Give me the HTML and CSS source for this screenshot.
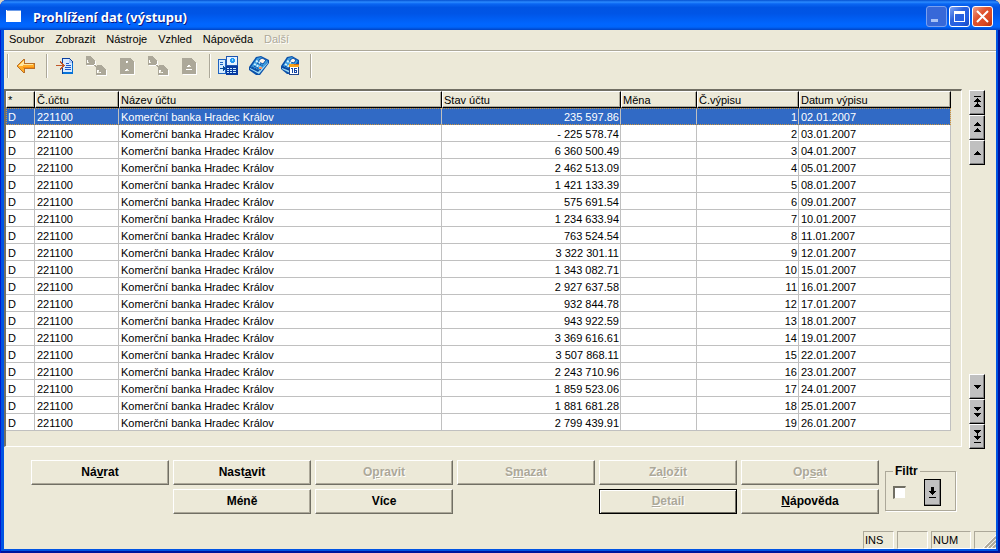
FILE: index.html
```
<!DOCTYPE html>
<html lang="cs">
<head>
<meta charset="utf-8">
<title>Prohlížení dat (výstupu)</title>
<link rel="stylesheet" href="styles.css">
</head>
<body>
<svg class="symbols" aria-hidden="true">
  <symbol id="pages" viewBox="0 0 22 20">
    <path fill="currentColor" fill-rule="evenodd" d="M1 0h5v1h1v1h1v1h1v1h1v5h-9zM2 4v3h2v-1h-1v-2zM12 9h5v1h1v1h1v1h1v1h1v6h-10v-8h-1v-1h2zM12 14v3h4v-1h-2v-2zM9 8h1v1h1v1h-2z"/>
  </symbol>
</svg>
<div class="window">
  <header class="title-bar">
    <svg class="app-icon" viewBox="0 0 16 12" shape-rendering="crispEdges"><path fill="#fff" d="M0 0h15v12H0z"/><path fill="#6f9de8" d="M1 0h14v1H1z"/></svg>
    <h1 class="title">Prohlížení dat (výstupu)</h1>
    <div class="captions">
      <button class="caption faded" disabled aria-label="Minimalizovat"><svg viewBox="0 0 19 19"><path fill="#a9c2f5" d="M4 12h7v3H4z"/></svg></button>
      <button class="caption" aria-label="Maximalizovat"><svg viewBox="0 0 19 19"><path fill="#fff" fill-rule="evenodd" d="M4 4h11v11H4zM5 7v7h9V7z"/></svg></button>
      <button class="caption close" aria-label="Zavřít"><svg viewBox="0 0 19 19"><path stroke="#fff" stroke-width="2" d="M4 4l11 11M15 4L4 15"/></svg></button>
    </div>
  </header>

  <main class="client">
    <nav class="menu">
      <button>Soubor</button><button>Zobrazit</button><button>Nástroje</button><button>Vzhled</button><button>Nápověda</button><button disabled>Další</button>
    </nav>

    <div class="toolbar" role="toolbar">
      <span class="separator"></span>
      <button class="tool" aria-label="Návrat">
        <svg width="20" height="16" viewBox="0 0 20 16" shape-rendering="crispEdges">
          <path fill="#b8702a" d="M7 1h2v4h10v6h-10v4h-2v-1h-1v-1h-1v-1h-1v-1h-1v-1h-1v-1h-1v-2h1v-1h1v-1h1v-1h1v-1h1v-1h1z"/>
          <path fill="#ffab26" d="M7 2h1v4h10v4h-10v4h-1v-1h-1v-1h-1v-1h-1v-1h-1v-1h-1v-2h1v-1h1v-1h1v-1h1v-1h1z"/>
          <path fill="#ffe7a0" d="M7 3h1v3h9v1h-10v1h-4v-1h1v-1h1v-1h1v-1h1z"/><path fill="#f98b0a" d="M7 9h11v1h-11z"/>
        </svg>
      </button>
      <span class="separator"></span>
      <button class="tool" aria-label="Otevřít záznam">
        <svg width="20" height="18" viewBox="0 0 20 18" shape-rendering="crispEdges">
          <path fill="#0a3f9e" d="M7 1h8v1h1v1h1v1h1v13h-11z"/><path fill="#0673d8" d="M8 15h10v2h-10zM17 6h1v11h-1z"/>
          <path fill="#d9eaff" d="M8 2h6v4h3v9h-9z"/><path fill="#a9c9fb" d="M14 2h1v1h1v1h1v2h-3z"/>
          <path fill="#1f5ac8" d="M11 6h3v1h-3zM11 8h5v1h-5zM10 10h6v1h-6zM10 12h6v1h-6z"/>
          <path fill="#c0592b" d="M1 8h6v-1h-1v-1h-1v-2h1v1h1v1h1v1h1v1h1v1h-1v1h-1v1h-1v1h-1v1h-1v-2h1v-1h1v-1h-6z"/>
        </svg>
      </button>
      <button class="tool" disabled aria-label="Kopírovat"><svg width="22" height="20" shape-rendering="crispEdges"><use href="#pages"/></svg></button>
      <button class="tool" disabled aria-label="Záznam">
        <svg width="16" height="18" viewBox="0 0 16 18" shape-rendering="crispEdges"><path fill="currentColor" fill-rule="evenodd" d="M1 1h11v1h1v1h1v1h1v13h-14zM7 4v2h2v-2zM7 12v1h-1v1h4v-1h-1v-1z"/></svg>
      </button>
      <button class="tool" disabled aria-label="Přesunout"><svg width="22" height="20" shape-rendering="crispEdges"><use href="#pages"/></svg></button>
      <button class="tool" disabled aria-label="Smazat záznam">
        <svg width="18" height="18" viewBox="0 0 18 18" shape-rendering="crispEdges"><path fill="currentColor" fill-rule="evenodd" d="M2 1h10v1h1v1h1v1h1v1h1v12h-14zM8 8v1h-1v1h4v-1h-1v-1zM6 12v1h6v-1z"/></svg>
      </button>
      <span class="separator"></span>
      <button class="tool" aria-label="Převod dat">
        <svg width="20" height="20" viewBox="0 0 20 20" shape-rendering="crispEdges">
          <path fill="#1e63c2" d="M0 3h8v15H0z"/><path fill="#d5ebff" d="M1 4h6v13H1z"/><path fill="#1e63c2" d="M2 6h3v1H2zM2 8h3v1H2z"/>
          <path fill="#064a9c" d="M2 12h3v-2h1v1h1v1h1v1h-1v1h-1v1h-1v-2h-3z"/>
          <path fill="#1e55b0" d="M8 0h12v10H8z"/><path fill="#e6f3ff" d="M9 1h10v8H9z"/><path fill="#2497f2" d="M13 2h3v1h1v3h-1v1h-3v-1h-1v-3h1z"/><path fill="#8fe2ff" d="M14 3h1v2h-1z"/>
          <path fill="#0639a0" d="M8 10h12v9H8z"/><path fill="#c9ecff" d="M9 12h2v1H9zM12 12h2v1h-2zM15 12h3v1h-3zM9 14h2v1H9zM12 14h2v1h-2zM15 14h3v1h-3zM9 16h2v1H9zM12 16h2v1h-2zM15 16h3v1h-3z"/>
        </svg>
      </button>
      <button class="tool" aria-label="Kalkulačka">
        <svg width="22" height="20" viewBox="0 0 22 20">
          <path fill="#0a4fa8" d="M8 1l5-1 8 4v3l-9 12H8l-7-5v-3z"/><path fill="#3c9de0" d="M9 2l4-1 7 4-8 10-9-4z"/>
          <path fill="#9edcf8" d="M2 12l8 4 10-10v1L11 18l-9-5z"/><path fill="#fff4e8" stroke="#0a4fa8" d="M11 4l3-2 4 2-3 4-4-2z"/>
          <path stroke="#d3f2ff" stroke-width="2" stroke-dasharray="2 1" d="M6 8l7 4M8 5l4 2"/><path stroke="#0a3f96" stroke-dasharray="2 1" d="M4 11l8 4M6 10l7 4M9 7l6 3"/><path fill="#f4956b" d="M11 11h3v2h-3z"/>
        </svg>
      </button>
      <button class="tool" aria-label="Kalendář">
        <svg width="22" height="20" viewBox="0 0 22 20">
          <path fill="#0a4fa8" d="M8 1l5-1 7 4v4l-9 10H8l-6-5v-3z"/><path fill="#3c9de0" d="M9 2l4-1 6 4-7 9-8-4z"/><path fill="#9edcf8" d="M3 12l8 3v2l-8-4z"/><path fill="#fff4e8" stroke="#0a4fa8" d="M11 4l3-2 3 2-2 3-4-1z"/>
          <path stroke="#d3f2ff" stroke-width="2" stroke-dasharray="2 1" d="M6 8l5 3M8 5l4 2"/><path stroke="#0a3f96" stroke-dasharray="2 1" d="M4 11l7 3M6 10l5 3"/>
          <g shape-rendering="crispEdges"><path fill="#23468d" d="M10 8h10v11H10z"/><path fill="#fff" d="M11 11h8v7h-8z"/><path fill="#f9a318" d="M10 8h10v3H10z"/><path fill="#d9670c" d="M15 8h5v1h-5z"/>
          <path fill="#1747a5" d="M12 12h2v5h-1v-4h-1zM15 12h3v1h-2v1h2v3h-3zM16 15v1h1v-1z"/></g>
        </svg>
      </button>
      <span class="separator"></span>
    </div>

    <div class="browser">
      <div class="frame">
        <table class="grid">
          <colgroup><col class="c-mark"><col class="c-account"><col><col class="c-balance"><col class="c-currency"><col class="c-number"><col class="c-date"></colgroup>
          <thead><tr><th>*</th><th>Č.účtu</th><th>Název účtu</th><th>Stav účtu</th><th>Měna</th><th>Č.výpisu</th><th>Datum výpisu</th></tr></thead>
          <tbody>
            <tr class="selected"><td>D</td><td>221100</td><td>Komerční banka Hradec Králov</td><td class="num">235 597.86</td><td></td><td class="num">1</td><td>02.01.2007</td></tr>
            <tr><td>D</td><td>221100</td><td>Komerční banka Hradec Králov</td><td class="num">- 225 578.74</td><td></td><td class="num">2</td><td>03.01.2007</td></tr>
            <tr><td>D</td><td>221100</td><td>Komerční banka Hradec Králov</td><td class="num">6 360 500.49</td><td></td><td class="num">3</td><td>04.01.2007</td></tr>
            <tr><td>D</td><td>221100</td><td>Komerční banka Hradec Králov</td><td class="num">2 462 513.09</td><td></td><td class="num">4</td><td>05.01.2007</td></tr>
            <tr><td>D</td><td>221100</td><td>Komerční banka Hradec Králov</td><td class="num">1 421 133.39</td><td></td><td class="num">5</td><td>08.01.2007</td></tr>
            <tr><td>D</td><td>221100</td><td>Komerční banka Hradec Králov</td><td class="num">575 691.54</td><td></td><td class="num">6</td><td>09.01.2007</td></tr>
            <tr><td>D</td><td>221100</td><td>Komerční banka Hradec Králov</td><td class="num">1 234 633.94</td><td></td><td class="num">7</td><td>10.01.2007</td></tr>
            <tr><td>D</td><td>221100</td><td>Komerční banka Hradec Králov</td><td class="num">763 524.54</td><td></td><td class="num">8</td><td>11.01.2007</td></tr>
            <tr><td>D</td><td>221100</td><td>Komerční banka Hradec Králov</td><td class="num">3 322 301.11</td><td></td><td class="num">9</td><td>12.01.2007</td></tr>
            <tr><td>D</td><td>221100</td><td>Komerční banka Hradec Králov</td><td class="num">1 343 082.71</td><td></td><td class="num">10</td><td>15.01.2007</td></tr>
            <tr><td>D</td><td>221100</td><td>Komerční banka Hradec Králov</td><td class="num">2 927 637.58</td><td></td><td class="num">11</td><td>16.01.2007</td></tr>
            <tr><td>D</td><td>221100</td><td>Komerční banka Hradec Králov</td><td class="num">932 844.78</td><td></td><td class="num">12</td><td>17.01.2007</td></tr>
            <tr><td>D</td><td>221100</td><td>Komerční banka Hradec Králov</td><td class="num">943 922.59</td><td></td><td class="num">13</td><td>18.01.2007</td></tr>
            <tr><td>D</td><td>221100</td><td>Komerční banka Hradec Králov</td><td class="num">3 369 616.61</td><td></td><td class="num">14</td><td>19.01.2007</td></tr>
            <tr><td>D</td><td>221100</td><td>Komerční banka Hradec Králov</td><td class="num">3 507 868.11</td><td></td><td class="num">15</td><td>22.01.2007</td></tr>
            <tr><td>D</td><td>221100</td><td>Komerční banka Hradec Králov</td><td class="num">2 243 710.96</td><td></td><td class="num">16</td><td>23.01.2007</td></tr>
            <tr><td>D</td><td>221100</td><td>Komerční banka Hradec Králov</td><td class="num">1 859 523.06</td><td></td><td class="num">17</td><td>24.01.2007</td></tr>
            <tr><td>D</td><td>221100</td><td>Komerční banka Hradec Králov</td><td class="num">1 881 681.28</td><td></td><td class="num">18</td><td>25.01.2007</td></tr>
            <tr><td>D</td><td>221100</td><td>Komerční banka Hradec Králov</td><td class="num">2 799 439.91</td><td></td><td class="num">19</td><td>26.01.2007</td></tr>
          </tbody>
        </table>
      </div>
      <div class="pager">
        <div class="pager-group">
          <button aria-label="Začátek"><svg viewBox="0 0 7 13" shape-rendering="crispEdges"><path d="M0 0h7v1H0zM3 2h1v1h1v1h1v1h1v1H4v2h1v1h1v1h1v1H0v-1h1V9h1V8h1V6H0V5h1V4h1V3h1z"/></svg></button>
          <button aria-label="Stránka zpět"><svg viewBox="0 0 7 13" shape-rendering="crispEdges"><path d="M3 1h1v1h1v1h1v1h1v1H0V4h1V3h1V2h1zM3 7h1v1h1v1h1v1h1v1H0v-1h1V9h1V8h1z"/></svg></button>
          <button aria-label="Řádek zpět"><svg viewBox="0 0 7 13" shape-rendering="crispEdges"><path d="M3 5h1v1h1v1h1v1h1v1H0V8h1V7h1V6h1z"/></svg></button>
        </div>
        <div class="pager-group">
          <button aria-label="Řádek vpřed"><svg viewBox="0 0 7 13" shape-rendering="crispEdges"><path d="M0 5h7v1H6v1H5v1H4v1H3V8H2V7H1V6H0z"/></svg></button>
          <button aria-label="Stránka vpřed"><svg viewBox="0 0 7 13" shape-rendering="crispEdges"><path d="M0 2h7v1H6v1H5v1H4v1H3V5H2V4H1V3H0zM0 8h7v1H6v1H5v1H4v1H3v-1H2v-1H1V9H0z"/></svg></button>
          <button aria-label="Konec"><svg viewBox="0 0 7 13" shape-rendering="crispEdges"><path d="M0 0h7v1H6v1H5v1H4v3h3v1H6v1H5v1H4v1H3V9H2V8H1V7H0V6h3V3H2V2H1V1H0zM0 12h7v1H0z"/></svg></button>
        </div>
      </div>
    </div>

    <div class="actions">
      <div class="buttons">
        <button>Ná<u>v</u>rat</button><button>Nast<u>a</u>vit</button><button disabled>O<u>p</u>ravit</button><button disabled>S<u>m</u>azat</button><button disabled>Za<u>l</u>ožit</button><button disabled>Op<u>s</u>at</button>
        <button class="less">Méně</button><button>Více</button><button class="detail" disabled><u>D</u>etail</button><button><u>N</u>ápověda</button>
      </div>
      <fieldset class="filter">
        <legend><label for="filter">Filtr</label></legend>
        <input type="checkbox" id="filter">
        <button class="filter-set" aria-label="Nastavit filtr"><svg viewBox="0 0 7 11" shape-rendering="crispEdges"><path d="M2 0h3v4h2v1H6v1H5v1H4v1H3V7H2V6H1V5H0V4h2zM0 10h7v1H0z"/></svg></button>
      </fieldset>
    </div>

    <footer class="status">
      <span class="pane">INS</span><span class="pane"></span><span class="pane wide">NUM</span>
      <span class="pane grip"><svg width="13" height="13" viewBox="0 0 13 13"><path stroke="#fff" d="M0 13L13 0M4 13L13 4M8 13L13 8"/><path stroke="#aca899" stroke-width="2" d="M2 13L13 2M6 13L13 6M10 13L13 10"/></svg></span>
    </footer>
  </main>
</div>
</body>
</html>
```
FILE: styles.css
```
* { box-sizing: border-box; }

:root {
  --face: #ece9d8;
  --shadow: #aca899;
  --dark: #716f64;
  --line: #c0c0c0;
}

body {
  margin: 0;
  background: #d9d5c4;
  color: #000;
  font: 11px/13px "Liberation Sans", Arial, sans-serif;
}

button {
  margin: 0;
  padding: 0;
  border: 0;
  background: none;
  color: inherit;
  font: inherit;
}

.symbols { display: none; }

.window {
  display: flex;
  flex-direction: column;
  min-height: 100vh;
  padding: 0 4px 4px;
  border-radius: 7px 7px 0 0;
  background: #0054e3;
  box-shadow: inset 1px 0 #0019cf, inset -2px 0 #00139c, inset 0 -2px #00139c;
}

.title-bar {
  display: flex;
  align-items: center;
  height: 30px;
  margin: 0 -4px;
  padding: 2px 7px 0 6px;
  border-radius: 7px 7px 0 0;
  background: linear-gradient(#0450d0 0, #2b8bff 7%, #0a66f2 13%, #0054e3 25%, #0055e6 45%, #0066ff 80%, #0065fb 90%, #0043c4 100%);
}

.app-icon { width: 16px; height: 12px; }

.title {
  flex: 1;
  margin: 0 0 0 11px;
  padding-top: 2px;
  color: #fff;
  font: bold 13px/16px "Noto Sans", "Open Sans", sans-serif;
  text-shadow: 1px 1px #0a1883;
}

.captions { display: flex; gap: 2px; }

.caption {
  width: 21px;
  height: 21px;
  border: 1px solid #fff;
  border-radius: 3px;
  background: linear-gradient(135deg, #7fa5f4, #2c62dc 40%, #2460e6 70%, #1748c0);
}

.caption svg { display: block; width: 19px; height: 19px; }
.caption.close { background: linear-gradient(135deg, #f0a08a, #e0532f 40%, #dc4a24 70%, #b5320e); }
.caption.faded { border-color: #7ba0ee; background: #3768d8; }

.client {
  display: flex;
  flex: 1;
  flex-direction: column;
  background: var(--face);
}

.menu {
  display: flex;
  gap: 11px;
  height: 21px;
  padding: 0 5px 2px;
  border-bottom: 1px solid var(--shadow);
}

.menu button:disabled,
.buttons button:disabled {
  color: var(--shadow);
  text-shadow: 1px 1px #fff;
}

.toolbar {
  display: flex;
  height: 38px;
  padding: 2px 3px 10px;
  border-top: 1px solid #fff;
}

.separator {
  width: 2px;
  height: 24px;
  margin: 0 1px 0 5px;
  border-left: 1px solid var(--shadow);
  border-right: 1px solid #fff;
}

.separator:first-child { margin-left: 0; }

.tool {
  display: flex;
  align-items: center;
  justify-content: center;
  width: 31px;
  height: 24px;
}

.tool:disabled { color: var(--shadow); }
.tool:disabled svg { filter: drop-shadow(1px 1px 0 #fff); }

.browser { display: flex; gap: 7px; padding-right: 11px; }

.frame {
  flex: 1;
  margin-bottom: 2px;
  padding: 0 10px 15px 0;
  border: solid;
  border-width: 2px 1px 1px 2px;
  border-color: var(--dark) #fff #fff var(--dark);
}

.grid {
  width: 100%;
  table-layout: fixed;
  border-collapse: separate;
  border-spacing: 0;
}

.c-mark { width: 29px; }
.c-account { width: 84px; }
.c-balance { width: 179px; }
.c-currency { width: 76px; }
.c-number { width: 102px; }
.c-date { width: 152px; }

.grid th {
  height: 17px;
  padding: 1px 2px 0 1px;
  border: 1px solid;
  border-color: #fff #000 #000 #fff;
  box-shadow: inset -1px -1px var(--shadow);
  font-weight: normal;
  text-align: left;
}

.grid td {
  height: 17px;
  padding: 2px 1px 0 2px;
  border: solid var(--line);
  border-width: 0 1px 1px 0;
  background: #fff;
  white-space: nowrap;
}

.grid .num { text-align: right; }

.grid .selected { outline: 1px dotted #ce9539; outline-offset: -1px; }
.grid .selected td { border-bottom-color: #316ac5; background: #316ac5; color: #fff; }

.pager {
  display: flex;
  flex-direction: column;
  justify-content: space-between;
  width: 16px;
  padding-top: 1px;
}

.pager button,
.filter-set {
  display: flex;
  align-items: center;
  justify-content: center;
  width: 16px;
  height: 25px;
  border: 1px solid;
  border-color: #fff #000 #000 #fff;
  background: var(--line);
  box-shadow: inset -1px -1px #808080;
}

.pager svg { width: 7px; height: 13px; }

.actions { display: flex; padding: 11px 40px 0 27px; }

.buttons {
  display: grid;
  flex: 1;
  grid-template-columns: repeat(6, 1fr);
  gap: 4px;
}

.buttons button {
  height: 25px;
  border: 1px solid;
  border-color: #fff var(--dark) var(--dark) #fff;
  box-shadow: inset -1px -1px var(--shadow);
  font-size: 12px;
  font-weight: bold;
}

.buttons .less { grid-column: 2; }

.buttons .detail {
  grid-column: 5;
  border-color: #000;
  box-shadow: inset 1px 1px #fff, inset -1px -1px var(--dark);
}

.filter {
  display: flex;
  gap: 18px;
  align-items: center;
  width: 71px;
  height: 46px;
  margin: 5px 0 0 6px;
  padding: 0 7px 4px;
  border: 1px solid var(--shadow);
  box-shadow: 1px 1px #fff;
}

.filter legend {
  padding: 0 2px;
  font-size: 12px;
  font-weight: bold;
}

.filter input {
  appearance: none;
  width: 13px;
  height: 13px;
  margin: 0;
  border: solid;
  border-width: 2px 1px 1px 2px;
  border-color: var(--dark) var(--face) var(--face) var(--dark);
  background: #fff;
}

.filter-set { width: 17px; height: 27px; border-color: #000; }
.filter-set svg { width: 7px; height: 11px; }

.status {
  display: flex;
  gap: 3px;
  justify-content: flex-end;
  height: 18px;
  margin-top: auto;
}

.pane {
  width: 31px;
  padding: 2px 1px;
  border: 1px solid;
  border-color: var(--shadow) #fff #fff var(--shadow);
}

.pane.wide { width: 40px; }

.pane.grip {
  display: flex;
  align-items: flex-end;
  justify-content: flex-end;
  width: 22px;
  padding: 0;
  border-right: 0;
}
```
